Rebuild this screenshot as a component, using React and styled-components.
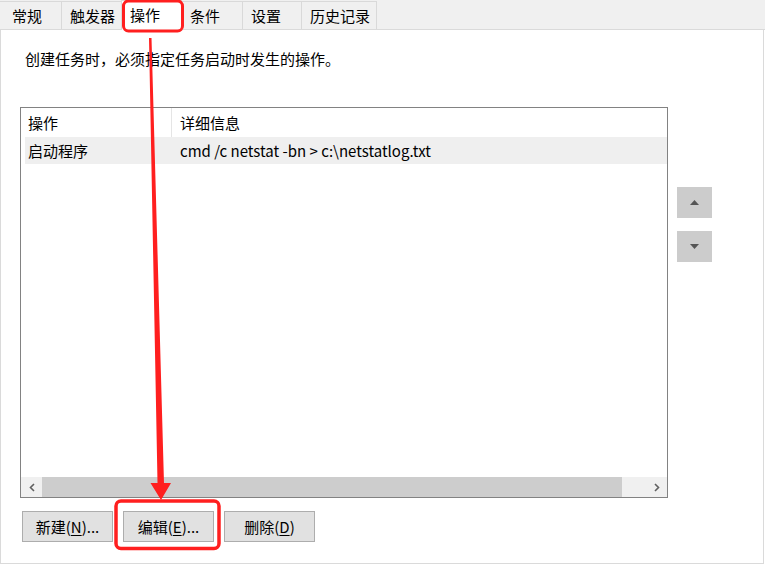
import React from 'react';
import styled, { createGlobalStyle } from 'styled-components';

const Global = createGlobalStyle`
  html, body { margin: 0; padding: 0; background: #fff; }
  body {
    font-family: "Noto Sans CJK SC", "Noto Sans", sans-serif;
    color: #000;
  }
`;

const Window = styled.div`
  position: relative;
  width: 765px;
  height: 566px;
  overflow: hidden;
  background: #fff;
  display: flex;
  flex-direction: column;
`;

const TabBar = styled.div`
  flex: none;
  height: 30px;
  box-sizing: border-box;
  background: #f0f0f0;
  border-bottom: 1px solid #dadada;
  display: flex;
  align-items: flex-end;
`;

const Tab = styled.div`
  box-sizing: border-box;
  width: ${p => p.$w}px;
  height: ${p => (p.$active ? 30 : 28)}px;
  margin-bottom: ${p => (p.$active ? -1 : 0)}px;
  margin-left: -1px;
  padding-left: ${p => p.$pl || 8}px;
  background: ${p => (p.$active ? '#fff' : '#f0f0f0')};
  border: 1px solid #d9d9d9;
  border-bottom: none;
  display: flex;
  align-items: center;
  justify-content: flex-start;
  font-size: 15px;
  line-height: 1;
  padding-bottom: ${p => (p.$active ? 3 : 1)}px;
  position: relative;
  z-index: ${p => (p.$active ? 1 : 0)};
  &:first-child { margin-left: 0; border-left: none; }
`;

const Panel = styled.div`
  flex: none;
  width: 764px;
  height: 534px;
  box-sizing: border-box;
  border: 1px solid #dadada;
  border-top: none;
  padding: 0 0 0 19px;
  display: flex;
  flex-direction: column;
`;

const Description = styled.div`
  margin-top: 19px;
  padding-left: 5px;
  height: 20px;
  line-height: 20px;
  font-size: 15px;
`;

const ListArea = styled.div`
  margin-top: 38px;
  display: flex;
  gap: 9px;
`;

const ListBox = styled.div`
  width: 648px;
  height: 391px;
  box-sizing: border-box;
  border: 1px solid #828282;
  display: flex;
  flex-direction: column;
`;

const HeaderRow = styled.div`
  display: flex;
  height: 29px;
  flex: none;
`;

const HeaderCell = styled.div`
  box-sizing: border-box;
  width: ${p => (p.$w ? `${p.$w}px` : 'auto')};
  flex: ${p => (p.$w ? 'none' : '1')};
  padding-left: ${p => p.$pl}px;
  border-right: ${p => (p.$sep ? '1px solid #e5e5e5' : 'none')};
  display: flex;
  align-items: center;
  font-size: 15px;
`;

const DataRow = styled.div`
  display: flex;
  height: 27px;
  flex: none;
  margin-left: 4px;
  background: #efefef;
`;

const DataCell = styled.div`
  box-sizing: border-box;
  width: ${p => (p.$w ? `${p.$w}px` : 'auto')};
  flex: ${p => (p.$w ? 'none' : '1')};
  padding-left: ${p => p.$pl}px;
  display: flex;
  align-items: center;
  font-size: 15px;
  white-space: nowrap;
`;

const ListBody = styled.div`
  flex: 1;
`;

const HScroll = styled.div`
  flex: none;
  height: 20px;
  background: #f0f0f0;
  display: flex;
`;

const ScrollBtn = styled.div`
  width: 21px;
  display: flex;
  align-items: center;
  justify-content: center;
`;

const Thumb = styled.div`
  width: 580px;
  background: #cdcdcd;
`;

const Track = styled.div`
  flex: 1;
`;

const SideColumn = styled.div`
  padding-top: 80px;
  display: flex;
  flex-direction: column;
  gap: 13px;
`;

const MoveButton = styled.div`
  width: 35px;
  height: 31px;
  background: #cccccc;
  display: flex;
  align-items: center;
  justify-content: center;
`;

const ButtonRow = styled.div`
  margin-top: 13px;
  padding-left: 2px;
  display: flex;
  gap: 10px;
`;

const Button = styled.div`
  width: 91px;
  height: 31px;
  box-sizing: border-box;
  background: #e1e1e1;
  border: 1px solid #adadad;
  display: flex;
  align-items: center;
  justify-content: center;
  font-size: 15px;
  padding-bottom: 1px;
  u { text-underline-offset: 2px; }
`;

const Overlay = styled.svg`
  position: absolute;
  left: 0;
  top: 0;
  pointer-events: none;
  z-index: 5;
`;

const tabs = [
  { label: '常规', w: 62, pl: 12 },
  { label: '触发器', w: 61 },
  { label: '操作', w: 61, active: true },
  { label: '条件', w: 62 },
  { label: '设置', w: 60 },
  { label: '历史记录', w: 76 },
];

const Tri = ({ up }) => (
  <svg width="9" height="5" viewBox="0 0 9 5">
    <polygon points={up ? '0,5 9,5 4.5,0' : '0,0 9,0 4.5,5'} fill="#555" />
  </svg>
);

const Chevron = ({ left }) => (
  <svg width="6" height="9" viewBox="0 0 6 9">
    <polyline
      points={left ? '5,1 1.5,4.5 5,8' : '1,1 4.5,4.5 1,8'}
      fill="none"
      stroke="#606060"
      strokeWidth="1.6"
    />
  </svg>
);

export default function App() {
  return (
    <>
      <Global />
      <Window>
        <TabBar>
          {tabs.map(t => (
            <Tab key={t.label} $w={t.w} $active={t.active} $pl={t.pl}>
              {t.label}
            </Tab>
          ))}
        </TabBar>
        <Panel>
          <Description>创建任务时，必须指定任务启动时发生的操作。</Description>
          <ListArea>
            <ListBox>
              <HeaderRow>
                <HeaderCell $w={151} $pl={7} $sep>操作</HeaderCell>
                <HeaderCell $pl={8}>详细信息</HeaderCell>
              </HeaderRow>
              <DataRow>
                <DataCell $w={147} $pl={3}>启动程序</DataCell>
                <DataCell $pl={8}>cmd /c netstat -bn &gt; c:\netstatlog.txt</DataCell>
              </DataRow>
              <ListBody />
              <HScroll>
                <ScrollBtn><Chevron left /></ScrollBtn>
                <Thumb />
                <Track />
                <ScrollBtn><Chevron /></ScrollBtn>
              </HScroll>
            </ListBox>
            <SideColumn>
              <MoveButton><Tri up /></MoveButton>
              <MoveButton><Tri /></MoveButton>
            </SideColumn>
          </ListArea>
          <ButtonRow>
            <Button>新建(<u>N</u>)...</Button>
            <Button>编辑(<u>E</u>)...</Button>
            <Button>删除(<u>D</u>)</Button>
          </ButtonRow>
        </Panel>
        <Overlay width="765" height="566" viewBox="0 0 765 566">
          <rect x="123.5" y="1" width="59" height="30" rx="5" fill="none" stroke="#ff1f1f" strokeWidth="3" />
          <rect x="116" y="501" width="103" height="47.5" rx="5" fill="none" stroke="#ff1f1f" strokeWidth="3.5" />
          <polygon
            points="149,38 151.5,38 164,483 171,483 161,500 150.5,483 157.5,483"
            fill="#ff1f1f"
          />
        </Overlay>
      </Window>
    </>
  );
}
